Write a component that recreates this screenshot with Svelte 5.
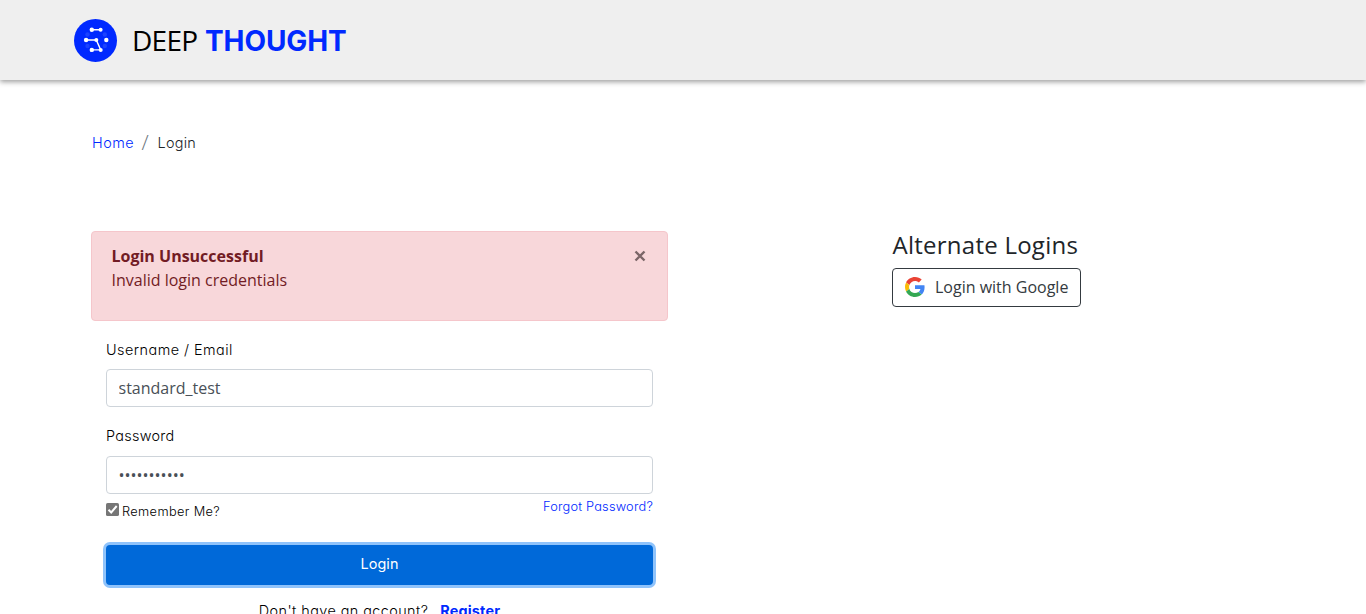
<script>
  let username = $state('standard_test');
  let password = $state('deepthought');
  let remember = $state(true);
</script>

<header>
  <a class="brand" href="#home" aria-label="Deep Thought">
    <svg class="mark" viewBox="0 0 44 44" width="44" height="44">
      <circle cx="21.5" cy="22.4" r="21.5" fill="#0029ff" />
      <g fill="#1c42ff">
        <circle cx="13.5" cy="16.5" r="2.2" /><circle cx="13.5" cy="28" r="2.2" />
        <circle cx="30.8" cy="16.5" r="2.2" /><circle cx="30.8" cy="28" r="2.2" />
      </g>
      <path d="M17.8 11.7H26.6M12.1 22H22.3L26.7 31.9M17.8 31.9H26.7" fill="none" stroke="#fff" stroke-width="1.4" />
      <g fill="#fff">
        <circle cx="17.8" cy="11.7" r="2.2" /><circle cx="26.6" cy="11.7" r="2" />
        <circle cx="12.1" cy="22" r="2.2" /><circle cx="22.3" cy="22" r="2" />
        <circle cx="32.3" cy="22" r="2.2" />
        <circle cx="17.8" cy="31.9" r="2.2" /><circle cx="26.7" cy="31.9" r="2" />
      </g>
    </svg>
    <span class="deep">DEEP</span><span class="thought">THOUGHT</span>
  </a>
</header>

<main>
  <nav><a href="#home">Home</a><span class="slash">/</span><span class="current">Login</span></nav>

  <div class="columns">
    <section class="login">
      <div class="alert">
        <div><strong>Login Unsuccessful</strong><p>Invalid login credentials</p></div>
        <button class="close" aria-label="Close">
          <svg width="12" height="12" viewBox="0 0 12 12"><path d="M1.5 1.5L10.5 10.5M10.5 1.5L1.5 10.5" stroke="#7b6668" stroke-width="2.4" /></svg>
        </button>
      </div>
      <form onsubmit={(e) => e.preventDefault()}>
        <label for="user"><span class="user-label">Username / Email</span></label>
        <input id="user" class="field" bind:value={username} />
        <label for="pass" class="second"><span class="pass-label">Password</span></label>
        <input id="pass" class="field" type="password" bind:value={password} />
        <div class="options">
          <label class="remember"><input type="checkbox" bind:checked={remember} />
            <svg width="13" height="13" viewBox="0 0 13 13"><rect width="13" height="13" rx="1.6" fill="#767676" />{#if remember}<path d="M2.5 6.8L5.2 9.5L10.7 3" fill="none" stroke="#fff" stroke-width="2" />{/if}</svg>
            <span>Remember Me?</span></label>
          <a class="forgot" href="#forgot">Forgot Password?</a>
        </div>
        <button class="submit">Login</button>
        <p class="register"><span>Don't have an account?</span><a href="#register">Register</a></p>
      </form>
    </section>

    <aside>
      <h2>Alternate Logins</h2>
      <button class="google">
        <svg width="20" height="20" viewBox="0 0 48 48">
          <path fill="#ea4335" d="M24 9.5c3.54 0 6.71 1.22 9.21 3.6l6.85-6.85C35.9 2.38 30.47 0 24 0 14.62 0 6.51 5.38 2.56 13.22l7.98 6.19C12.43 13.72 17.74 9.5 24 9.5z" />
          <path fill="#4285f4" d="M46.98 24.55c0-1.57-.15-3.09-.38-4.55H24v9.02h12.94c-.58 2.96-2.26 5.48-4.78 7.18l7.73 6c4.51-4.18 7.09-10.36 7.09-17.65z" />
          <path fill="#fbbc05" d="M10.53 28.59A14.5 14.5 0 0 1 9.77 24c0-1.6.27-3.14.76-4.59l-7.98-6.19A23.9 23.9 0 0 0 0 24c0 3.88.92 7.54 2.56 10.78l7.97-6.19z" />
          <path fill="#34a853" d="M24 48c6.48 0 11.93-2.13 15.89-5.81l-7.73-6c-2.15 1.45-4.92 2.3-8.16 2.3-6.26 0-11.57-4.22-13.47-9.91l-7.98 6.19C6.51 42.62 14.62 48 24 48z" />
        </svg>
        <span>Login with Google</span>
      </button>
    </aside>
  </div>
</main>

<style>
  :global(body) { overflow: hidden; background: #fff; }
  :global(#app) { height: 614px; overflow: hidden; }
  header, main { font-family: Inter, "Open Sans", sans-serif; font-feature-settings: "cv11"; box-sizing: border-box; }
  a { text-decoration: none; color: #0029ff; }
  p, h2 { margin: 0; }
  button { cursor: pointer; }
  header { height: 80px; background: #efefef; box-shadow: 0 2px 5px rgba(0, 0, 0, .38); padding: 18px 0 0 74px; }
  .brand { display: flex; align-items: center; height: 44px; line-height: 44px; }
  .deep { margin-left: 14px; width: 73px; color: #000; font: 400 28px/44px "Open Sans", sans-serif; letter-spacing: -.7px; }
  .thought { padding-top: 2px; font-size: 28px; font-weight: 700; letter-spacing: -.1px; }
  main { padding: 50px 91px 0; }
  nav { display: flex; align-items: center; height: 24px; font-size: 14.4px; font-weight: 300; letter-spacing: .5px; }
  nav a { margin-left: 1px; }
  .slash { margin: 0 7px 0 7.5px; width: 9px; color: #6c757d; font: 300 21px/24px "Open Sans", sans-serif; letter-spacing: 0; }
  .current { color: #212529; letter-spacing: .25px; }
  .columns { display: flex; align-items: flex-start; margin-top: 77px; }
  .login { width: 577px; }
  .alert { box-sizing: border-box; height: 90px; display: flex; justify-content: space-between; padding: 12px 20px 12px 19.5px; border: 1px solid #f5c6cb; border-radius: 4px; background: #f8d7da; color: #721c24; font: 400 16px/24px "Open Sans", sans-serif; }
  .alert strong { font-weight: 700; }
  .close { align-self: flex-start; display: flex; padding: 6px 1px; border: 0; background: none; }
  form { padding: 17px 15px 0; }
  label { display: block; height: 24px; line-height: 24px; font-size: 14.4px; font-weight: 300; color: #000; }
  .user-label { letter-spacing: .47px; }
  .pass-label { letter-spacing: .3px; }
  .field { display: block; box-sizing: border-box; width: 547px; height: 38px; margin-top: 7px; padding: 6px 12px 6px 11.5px; border: 1px solid #ced4da; border-radius: 4px; color: #495057; font: 400 16px/24px "Open Sans", sans-serif; outline: none; }
  .second { margin-top: 17px; }
  #pass { margin-top: 8px; }
  .options { display: flex; justify-content: space-between; height: 51px; font-size: 12.8px; }
  .remember { display: flex; align-items: center; gap: 3px; margin-top: 6px; font-size: 12.8px; font-weight: 300; letter-spacing: .36px; }
  .remember input { appearance: none; width: 0; height: 0; margin: 0 -3px 0 0; }
  .remember svg { margin-top: -5px; }
  .forgot { line-height: 26px; font-weight: 300; letter-spacing: .2px; }
  .submit { width: 547px; height: 40px; display: block; border: 0; border-radius: 4px; background: #0069d9; box-shadow: 0 0 0 3px #8fc3fb; color: #fff; font: 400 14.4px/38px Inter, sans-serif; padding: 0 0 2px; letter-spacing: .1px; }
  .register { display: flex; justify-content: center; gap: 12px; margin-top: 14px; font-size: 14.4px; line-height: 24px; font-weight: 300; letter-spacing: .43px; }
  .register a { font-weight: 700; letter-spacing: .18px; }
  aside { margin-left: 224px; color: #212529; font-family: "Open Sans", sans-serif; }
  h2 { margin: -1px 0 0 .5px; font-size: 24px; font-weight: 400; line-height: 29px; letter-spacing: .25px; }
  .google { display: flex; align-items: center; gap: 10px; height: 39px; margin-top: 9px; padding: 0 12px 2px; border: 1px solid #343a40; border-radius: 4px; background: #fff; color: #343a40; font: 400 16px/24px "Open Sans", sans-serif; }
</style>
